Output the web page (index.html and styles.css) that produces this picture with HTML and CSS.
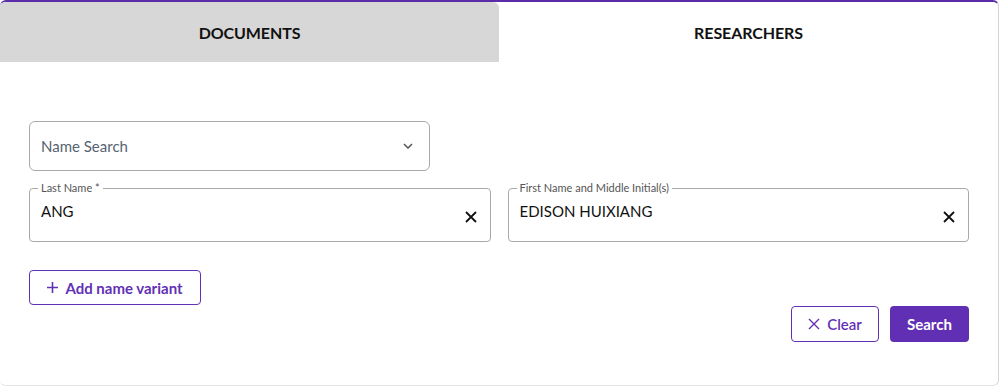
FILE: index.html
```html
<!DOCTYPE html>
<html lang="en">
<head>
    <meta charset="UTF-8">
    <title>Researcher Search</title>
    <meta name="viewport" content="width=device-width, initial-scale=1.0">
    <link rel="stylesheet" href="styles.css">
</head>
<body>
    <div class="card">
        <div class="tabs">
            <div class="tab">DOCUMENTS</div>
            <div class="tab active">RESEARCHERS</div>
        </div>
        <div class="form">
            <div class="select">
                <span class="placeholder">Name Search</span>
                <svg class="chevron" width="10" height="6" viewBox="0 0 10 6"><path d="M1 1l4 4 4-4" fill="none" stroke="#555" stroke-width="1.5"/></svg>
            </div>
            <div class="row">
                <fieldset class="field">
                    <legend>Last Name *</legend>
                    <span class="value">ANG</span>
                    <svg class="clear-x" width="12" height="12" viewBox="0 0 12 12"><path d="M1 1l10 10M11 1L1 11" stroke="#111" stroke-width="1.8"/></svg>
                </fieldset>
                <fieldset class="field">
                    <legend>First Name and Middle Initial(s)</legend>
                    <span class="value">EDISON HUIXIANG</span>
                    <svg class="clear-x" width="12" height="12" viewBox="0 0 12 12"><path d="M1 1l10 10M11 1L1 11" stroke="#111" stroke-width="1.8"/></svg>
                </fieldset>
            </div>
            <div>
                <button class="btn outline add">
                    <svg width="11" height="11" viewBox="0 0 11 11"><path d="M5.5 0v11M0 5.5h11" stroke="#6231b5" stroke-width="1.6"/></svg>
                    Add name variant
                </button>
            </div>
            <div class="actions">
                <button class="btn outline">
                    <svg width="12" height="12" viewBox="0 0 12 12"><path d="M1 1l10 10M11 1L1 11" stroke="#6231b5" stroke-width="1.4"/></svg>
                    Clear
                </button>
                <button class="btn primary">Search</button>
            </div>
        </div>
    </div>
</body>
</html>
```

FILE: styles.css
```css
body {
    margin: 0;
    background: #fff;
    font-family: Lato, 'Noto Sans', sans-serif;
    color: #111;
}
.card {
    width: 998px;
    height: 383px;
    border-top: 2px solid #5a2ca8;
    border-right: 1px solid #d4d4d4;
    border-bottom: 1px solid #e4e4e4;
    border-radius: 6px;
    overflow: hidden;
    background: #fff;
}
.tabs {
    display: flex;
    height: 60px;
}
.tab {
    flex: 1;
    display: flex;
    align-items: center;
    justify-content: center;
    font-size: 16px;
    font-weight: 700;
    letter-spacing: -0.1px;
    background: #d7d7d7;
    border-top-right-radius: 6px;
}
.tab.active {
    background: #fff;
    border-top-left-radius: 6px;
}
.form {
    padding: 59px 29px 0 29px;
}
.select {
    height: 48px;
    border: 1px solid #a9a9a9;
    border-radius: 6px;
    display: flex;
    align-items: center;
    justify-content: space-between;
    padding: 0 16px 0 11px;
    box-sizing: content-box;
    width: 372px;
}
.placeholder {
    font-size: 15px;
    color: #566372;
}
.row {
    display: flex;
    gap: 17px;
    margin-top: 11px;
}
.field {
    flex: 1;
    margin: 0;
    height: 60px;
    box-sizing: border-box;
    border: 1px solid #a9a9a9;
    border-radius: 4px;
    padding: 0 13px 0 11px;
    display: flex;
    align-items: flex-start;
    justify-content: space-between;
    min-width: 0;
}
.field legend {
    font-size: 11px;
    color: #555;
    padding: 0 3px;
    margin-left: -3px;
    line-height: 12px;
}
.value {
    font-size: 15px;
    margin-top: 8px;
}
.clear-x {
    margin-top: 17px;
}
.btn {
    font-family: inherit;
    font-size: 15px;
    font-weight: 700;
    border-radius: 4px;
    height: 36px;
    display: inline-flex;
    align-items: center;
    justify-content: center;
    gap: 7px;
    cursor: pointer;
    box-sizing: border-box;
}
.btn.outline {
    background: #fff;
    color: #6231b5;
    border: 1px solid #6231b5;
}
.add {
    margin-top: 28px;
    width: 172px;
    height: 35px;
}
.actions {
    display: flex;
    justify-content: flex-end;
    gap: 11px;
    margin-top: 1px;
}
.actions .outline {
    width: 88px;
    font-weight: 600;
}
.btn.primary {
    width: 79px;
    background: #612fb4;
    color: #fff;
    border: none;
}
```
